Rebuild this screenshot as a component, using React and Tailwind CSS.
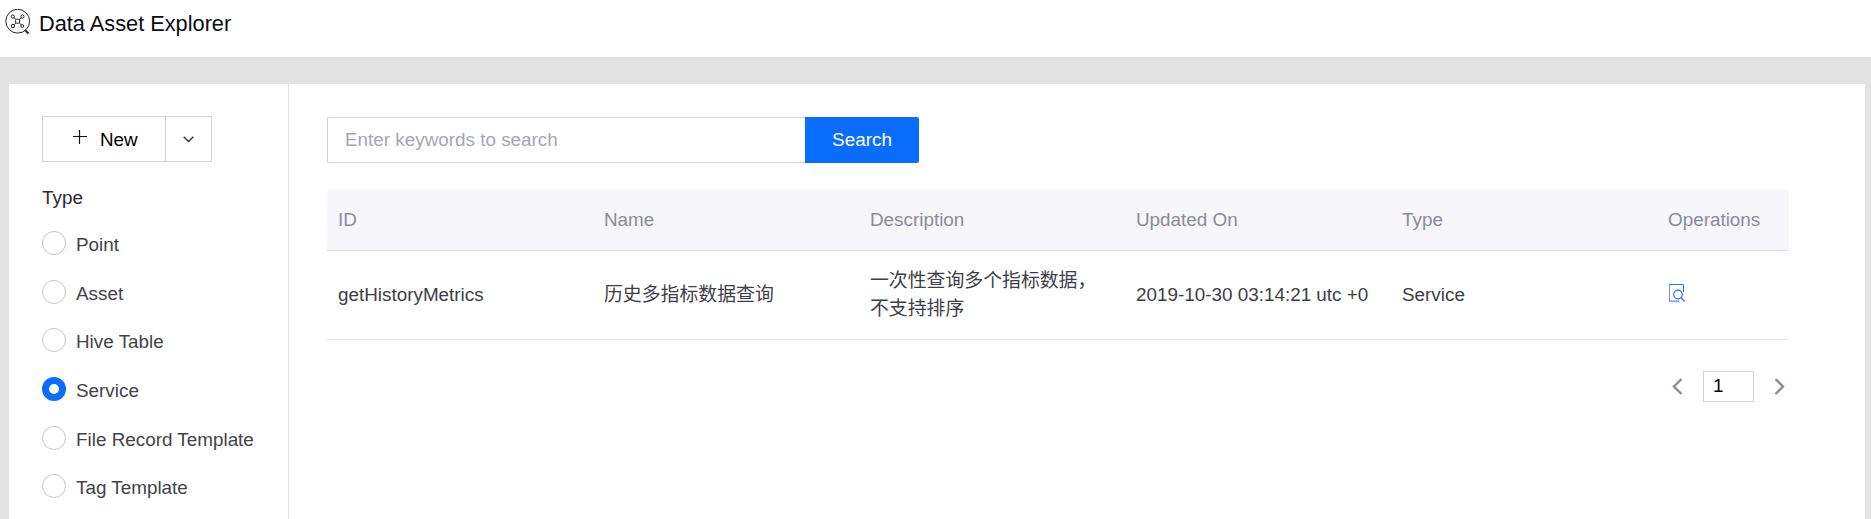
import React from 'react';

const types = ['Point', 'Asset', 'Hive Table', 'Service', 'File Record Template', 'Tag Template'];
const columns = ['ID', 'Name', 'Description', 'Updated On', 'Type', 'Operations'];

function LogoIcon() {
  return (
    <svg width="26" height="26" viewBox="0 0 26 26" fill="none" stroke="#23242c" strokeWidth="1">
      <circle cx="12.7" cy="12.2" r="11.9" />
      <path d="M19.8 21 L23.5 24.4" strokeWidth="2" />
      <rect x="10.6" y="10.2" width="4" height="4" rx="1" />
      <path d="M8.9 8.6 L10.9 10.5 M16.3 8.6 L14.3 10.5 M9.2 15.8 L10.9 14 M16 15.8 L14.3 14" />
      <circle cx="7.8" cy="7.6" r="1.6" />
      <circle cx="17.4" cy="7.6" r="1.6" />
      <circle cx="7.9" cy="17" r="1.7" />
      <circle cx="17.2" cy="17" r="1.4" />
    </svg>
  );
}

function DetailIcon() {
  return (
    <svg width="16" height="18" viewBox="0 0 16 18" fill="none">
      <path d="M0.5 17.5 V0.5 H14.5 V8" stroke="#1a75ff" />
      <path d="M0.5 1 V17" stroke="#6f8cff" />
      <path d="M0 17.2 H10" stroke="#8c9bff" strokeWidth="1.6" />
      <circle cx="9" cy="10.5" r="4.3" stroke="#1a6fff" strokeWidth="1.2" />
      <path d="M12 13.6 L15.6 17.3" stroke="#1a6fff" strokeWidth="1.3" />
    </svg>
  );
}

function Radio({ checked }) {
  return checked ? (
    <span className="flex size-6 items-center justify-center rounded-full bg-[#0b6dff]">
      <span className="size-[10px] rounded-full bg-white" />
    </span>
  ) : (
    <span className="size-6 rounded-full border border-[#c4c3d0] bg-white" />
  );
}

function Sidebar() {
  return (
    <aside className="w-[280px] shrink-0 border-r border-[#e1e1e8] pl-[33px] pt-8">
      <div className="flex h-[46px] w-[170px] border border-[#d3d3dd] text-black">
        <button className="flex w-[123px] items-center border-r border-[#d3d3dd] pl-[30px]">
          <svg className="-mt-1" width="14" height="14" viewBox="0 0 14 14" stroke="#111" strokeWidth="1.2">
            <path d="M0 6.5 H14 M6.5 0 V14" />
          </svg>
          <span className="pt-0.5 pl-[13px]">New</span>
        </button>
        <button className="flex flex-1 items-center justify-center pt-px pr-px">
          <svg width="11" height="7" viewBox="0 0 11 7" fill="none" stroke="#333" strokeWidth="1.4">
            <path d="M0.7 0.7 L5.5 5.5 L10.3 0.7" />
          </svg>
        </button>
      </div>
      <h2 className="mt-[25px] leading-[22px] text-[#2b2b35]">Type</h2>
      <ul className="mt-[10px]">
        {types.map((t) => (
          <li key={t} className="flex h-[48.6px] items-center gap-[10px] text-[#434348]">
            <Radio checked={t === 'Service'} />
            <span className="pt-1 leading-[22px] whitespace-nowrap">{t}</span>
          </li>
        ))}
      </ul>
    </aside>
  );
}

function AssetTable() {
  return (
    <div className="mt-[27px] w-[1462px]">
      <div className="grid h-[61px] grid-cols-[repeat(5,266px)_132px] items-center rounded-t-[2px] border-b border-[#dfdfe7] bg-[#f6f6fb] text-[#8b8b9b]">
        {columns.map((c) => (
          <div key={c} className="pl-[11px]">{c}</div>
        ))}
      </div>
      <div className="grid h-[89px] grid-cols-[repeat(5,266px)_132px] items-center border-b border-[#e2e2e6] text-[#3e3e46]">
        <div className="pl-[11px]">getHistoryMetrics</div>
        <div className="pl-[11px]">历史多指标数据查询</div>
        <div className="pl-[11px] leading-7">
          一次性查询多个指标数据，
          <br />
          不支持排序
        </div>
        <div className="pl-[11px]">2019-10-30 03:14:21 utc +0</div>
        <div className="pl-[11px]">Service</div>
        <div className="pb-1 pl-3"><DetailIcon /></div>
      </div>
    </div>
  );
}

function Pagination() {
  return (
    <div className="mt-[31px] flex h-[31px] w-[1458px] items-center justify-end">
      <svg width="11" height="17" viewBox="0 0 11 17" fill="none" stroke="#8b8b9b" strokeWidth="2.4">
        <path d="M9.5 1 L2 8.5 L9.5 16" />
      </svg>
      <div className="mr-5 ml-5 flex h-[31px] w-[51px] items-center border border-[#d3d3dd] pl-[9px] text-black">1</div>
      <svg width="11" height="17" viewBox="0 0 11 17" fill="none" stroke="#8b8b9b" strokeWidth="2.4">
        <path d="M1.5 1 L9 8.5 L1.5 16" />
      </svg>
    </div>
  );
}

export default function App() {
  return (
    <div className="flex h-[519px] w-[1871px] flex-col overflow-hidden bg-[#e3e3e3] font-['Liberation_Sans','Noto_Sans_CJK_SC',sans-serif] text-[18.86px]">
      <header className="flex h-[57px] shrink-0 items-start bg-white pt-[9px] pl-[5px]">
        <LogoIcon />
        <h1 className="pt-[3px] pl-2 text-[21.75px] leading-6 text-[#0c0c10]">Data Asset Explorer</h1>
      </header>
      <div className="mt-[27px] mr-[6px] ml-[9px] flex flex-1 bg-white">
        <Sidebar />
        <main className="pt-[33px] pl-[38px]">
          <div className="flex h-[46px]">
            <input
              className="w-[478px] rounded-l-[2px] border border-r-0 border-[#d3d3dd] px-[17px] outline-none placeholder:text-[#a6a6b5]"
              placeholder="Enter keywords to search"
            />
            <button className="w-[114px] rounded-r-[2px] bg-[#0b6dff] text-white">Search</button>
          </div>
          <AssetTable />
          <Pagination />
        </main>
      </div>
    </div>
  );
}
